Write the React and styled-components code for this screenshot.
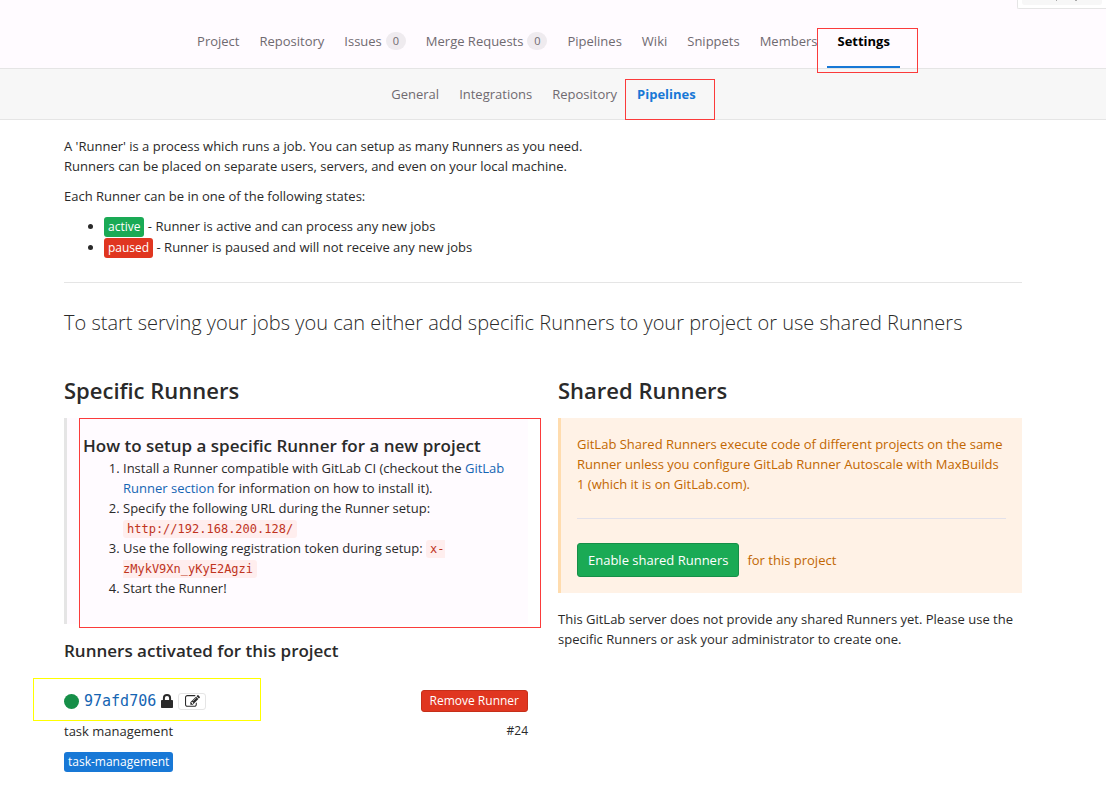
import React from "react";
import styled, { createGlobalStyle } from "styled-components";

const GlobalStyle = createGlobalStyle`
  * { box-sizing: border-box; }
  body {
    margin: 0;
    background: #fff;
    color: #2a2a2a;
    font: 13px/20px "Open Sans", "Noto Sans", sans-serif;
  }
  a { color: #1565b3; text-decoration: none; }
  p { margin: 0 0 10px; }
`;

const TopBar = styled.header`
  position: relative;
  height: 69px;
  padding: 15px 19px 0 0;
  background: #fffbff;
  border-bottom: 1px solid #e5e5e5;
`;

const TopMenu = styled.div`
  position: absolute;
  top: 0;
  right: 0;
  width: 89px;
  height: 9px;
  padding: 0 4px;
  background: #fff;
  border: 1px solid #e5e5e5;
  border-width: 0 0 1px 1px;
  border-bottom-left-radius: 2px;
`;

const TopMenuItem = styled.div`
  height: 5px;
  border-radius: 0 0 3px 3px;
  background:
    linear-gradient(#aaa, #aaa) 34px 0 / 1px 1px no-repeat,
    linear-gradient(#aaa, #aaa) 53px 0 / 2px 1px no-repeat,
    #f7f7f7;
`;

const NavList = styled.nav`
  display: flex;
  justify-content: center;
`;

const NavLink = styled.a`
  position: relative;
  display: flex;
  align-items: center;
  gap: 4px;
  height: ${(p) => (p.$sub ? "50px" : "53px")};
  padding: 0 10px;
  white-space: nowrap;
  color: ${(p) => (p.$active ? (p.$sub ? "#1878d6" : "#000") : "#6f6a70")};
  font-weight: ${(p) => (p.$active ? 700 : 400)};
  border-bottom: ${(p) => (p.$sub ? "0" : `2px solid ${p.$active ? "#1878d6" : "transparent"}`)};
`;

const Badge = styled.span`
  width: 20px;
  height: 18px;
  border-radius: 9px;
  background: #efebef;
  font-size: 11px;
  line-height: 18px;
  text-align: center;
`;

const SubBar = styled.div`
  height: 51px;
  padding-right: 19px;
  background: #f7f7f7;
  border-bottom: 1px solid #e5e5e5;
`;

const Mark = styled.span`
  position: absolute;
  inset: ${(p) => p.$inset};
  border: 1px solid ${(p) => p.$color || "#fb3b3b"};
  pointer-events: none;
`;

const Main = styled.main`
  padding: 16px 84px 24px 64px;
`;

const StateList = styled.ul`
  margin: 0;
  padding-left: 40px;
  line-height: 21px;
`;

const Label = styled.span`
  display: inline-block;
  padding: 0 4px;
  border-radius: 3px;
  background: ${(p) => p.$color};
  color: #fff;
  font-size: 12px;
  line-height: 20px;
  vertical-align: bottom;
`;

const Rule = styled.hr`
  height: 1px;
  margin: 24px 0;
  border: 0;
  background: ${(p) => p.$color || "#e5e5e5"};
`;

const Lead = styled.h4`
  margin: 0 0 36px;
  font-size: 20px;
  line-height: 32px;
  font-weight: 300;
`;

const Columns = styled.div`
  display: grid;
  grid-template-columns: 1fr 1fr;
  gap: 30px;
`;

const ColumnTitle = styled.h2`
  margin: 0 0 13px;
  font-size: 22px;
  line-height: 30px;
  font-weight: 600;
`;

const Setup = styled.section`
  position: relative;
  min-height: 206px;
  padding: 16px 12px 26px 16px;
  border-left: 3px solid #e5e5e5;
  background: #fffbff;
`;

const SubTitle = styled.h3`
  margin: 0;
  font-size: 17px;
  line-height: 24px;
  font-weight: 600;
`;

const Steps = styled.ol`
  margin: 0;
  padding-left: 40px;
`;

const Code = styled.code`
  padding: 2px 4px;
  border-radius: 3px;
  background: #ffeeee;
  color: #c0341d;
  font-family: "DejaVu Sans Mono", monospace;
  font-size: 12px;
  line-height: 16px;
`;

const Warning = styled.section`
  margin-bottom: 16px;
  padding: 16px;
  border-left: 3px solid #ffdcae;
  background: #fff2e6;
  color: #c26700;
`;

const Enable = styled.div`
  display: flex;
  align-items: center;
  gap: 8px;
`;

const Button = styled.button`
  height: ${(p) => (p.$small ? "22px" : "34px")};
  padding: 0 ${(p) => (p.$small ? "8px" : "10px")};
  border: 1px solid ${(p) => (p.$danger ? "#c62f19" : "#168f48")};
  border-radius: 3px;
  background: ${(p) => (p.$danger ? "#e03620" : "#1aaa55")};
  color: #fff;
  font: inherit;
  font-size: ${(p) => (p.$small ? "12px" : "13px")};
  white-space: nowrap;
`;

const Activated = styled.div`
  padding-top: 15px;
`;

const RunnerRow = styled.div`
  display: flex;
  align-items: center;
  justify-content: space-between;
  height: 40px;
  margin-top: 18px;
`;

const RunnerName = styled.div`
  position: relative;
  display: flex;
  align-items: center;
  gap: 5px;
  height: 40px;
  color: #2a2a2a;
`;

const Dot = styled.span`
  width: 15px;
  height: 15px;
  border-radius: 50%;
  background: #168f48;
`;

const RunnerLink = styled.a`
  font-family: "DejaVu Sans Mono", monospace;
  font-size: 15px;
`;

const EditButton = styled.button`
  display: flex;
  align-items: center;
  justify-content: center;
  width: 28px;
  height: 17px;
  padding: 0;
  border: 1px solid #e5e5e5;
  border-radius: 3px;
  background: #fff;
  color: #2a2a2a;
`;

const RunnerInfo = styled.div`
  display: flex;
  justify-content: space-between;
  margin-bottom: 11px;
`;

const Small = styled.small`
  font-size: 12px;
`;

const LockIcon = () => (
  <svg width="12" height="15" viewBox="0 0 12 15" aria-hidden="true">
    <path d="M0.8 6H11.2Q12 6 12 6.8V13.2Q12 14 11.2 14H0.8Q0 14 0 13.2V6.8Q0 6 0.8 6Z" fill="currentColor" />
    <path d="M2.9 6.500V4.100A3.1 3.1 0 0 1 9.1 4.100V6.500" fill="none" stroke="currentColor" strokeWidth="2" />
  </svg>
);

const EditIcon = () => (
  <svg width="15" height="13" viewBox="0 0 1792 1536" fill="currentColor" aria-hidden="true">
    <path d="M888 1056l116-116-152-152-116 116v56h96v96h56zm440-720q-16-16-33 1L945 687q-17 17-1 33t33-1l350-350q17-17 1-33zm80 594v190q0 119-84.500 203.500T1120 1408H288q-119 0-203.500-84.500T0 1120V288Q0 169 84.500 84.500T288 0h832q63 0 117 25 15 7 18 23 3 17-9 29l-49 49q-14 14-32 8-23-6-45-6H288q-66 0-113 47t-47 113v832q0 66 47 113t113 47h832q66 0 113-47t47-113V994q0-13 9-22l64-64q15-15 35-7t20 29zm-96-738l288 288-672 672H640V864zm444 132l-92 92-288-288 92-92q28-28 68-28t68 28l152 152q28 28 28 68t-28 68z" />
  </svg>
);

const mainNav = [
  { text: "Project" },
  { text: "Repository" },
  { text: "Issues", count: 0 },
  { text: "Merge Requests", count: 0 },
  { text: "Pipelines" },
  { text: "Wiki" },
  { text: "Snippets" },
  { text: "Members" },
  { text: "Settings", active: true },
];

const subNav = ["General", "Integrations", "Repository", "Pipelines"];

export default function App() {
  return (
    <>
      <GlobalStyle />
      <TopBar>
        <TopMenu><TopMenuItem /></TopMenu>
        <NavList aria-label="Project">
          {mainNav.map((item) => (
            <NavLink key={item.text} href="#" $active={item.active}>
              {item.text}
              {item.count !== undefined && <Badge>{item.count}</Badge>}
              {item.active && <Mark $inset="13px -18px -7px -10px" />}
            </NavLink>
          ))}
        </NavList>
      </TopBar>
      <SubBar>
        <NavList aria-label="Settings">
          {subNav.map((text) => (
            <NavLink key={text} href="#" $sub $active={text === "Pipelines"}>
              {text}
              {text === "Pipelines" && <Mark $inset="10px -9px -1px -2px" />}
            </NavLink>
          ))}
        </NavList>
      </SubBar>
      <Main>
        <p>
          A 'Runner' is a process which runs a job. You can setup as many Runners as you need.
          <br />
          Runners can be placed on separate users, servers, and even on your local machine.
        </p>
        <p>Each Runner can be in one of the following states:</p>
        <StateList>
          <li><Label $color="#1aaa55">active</Label> - Runner is active and can process any new jobs</li>
          <li><Label $color="#e03620">paused</Label> - Runner is paused and will not receive any new jobs</li>
        </StateList>
        <Rule />
        <Lead>To start serving your jobs you can either add specific Runners to your project or use shared Runners</Lead>
        <Columns>
          <div>
            <ColumnTitle>Specific Runners</ColumnTitle>
            <Setup>
              <SubTitle>How to setup a specific Runner for a new project</SubTitle>
              <Steps>
                <li>
                  Install a Runner compatible with GitLab CI (checkout the <a href="#">GitLab Runner section</a> for
                  information on how to install it).
                </li>
                <li>Specify the following URL during the Runner setup:<br /><Code>http://192.168.200.128/</Code></li>
                <li>Use the following registration token during setup: <Code>x-<wbr />zMykV9Xn_yKyE2Agzi</Code></li>
                <li>Start the Runner!</li>
              </Steps>
              <Mark $inset="0 -13px -4px 12px" />
            </Setup>
            <Activated>
              <SubTitle>Runners activated for this project</SubTitle>
              <RunnerRow>
                <RunnerName>
                  <Dot />
                  <RunnerLink href="#">97afd706</RunnerLink>
                  <LockIcon />
                  <EditButton aria-label="Edit runner"><EditIcon /></EditButton>
                  <Mark $inset="-3px -55px 0 -31px" $color="#ffff00" />
                </RunnerName>
                <Button $small $danger>Remove Runner</Button>
              </RunnerRow>
              <RunnerInfo>
                <span>task management</span>
                <Small>#24</Small>
              </RunnerInfo>
              <Label $color="#1878d6">task-management</Label>
            </Activated>
          </div>
          <div>
            <ColumnTitle>Shared Runners</ColumnTitle>
            <Warning>
              GitLab Shared Runners execute code of different projects on the same Runner unless you configure GitLab
              Runner Autoscale with MaxBuilds 1 (which it is on GitLab.com).
              <Rule $color="#e3e1ea" />
              <Enable>
                <Button>Enable shared Runners</Button>
                <span>for this project</span>
              </Enable>
            </Warning>
            <p>
              This GitLab server does not provide any shared Runners yet. Please use the specific Runners or ask your
              administrator to create one.
            </p>
          </div>
        </Columns>
      </Main>
    </>
  );
}
